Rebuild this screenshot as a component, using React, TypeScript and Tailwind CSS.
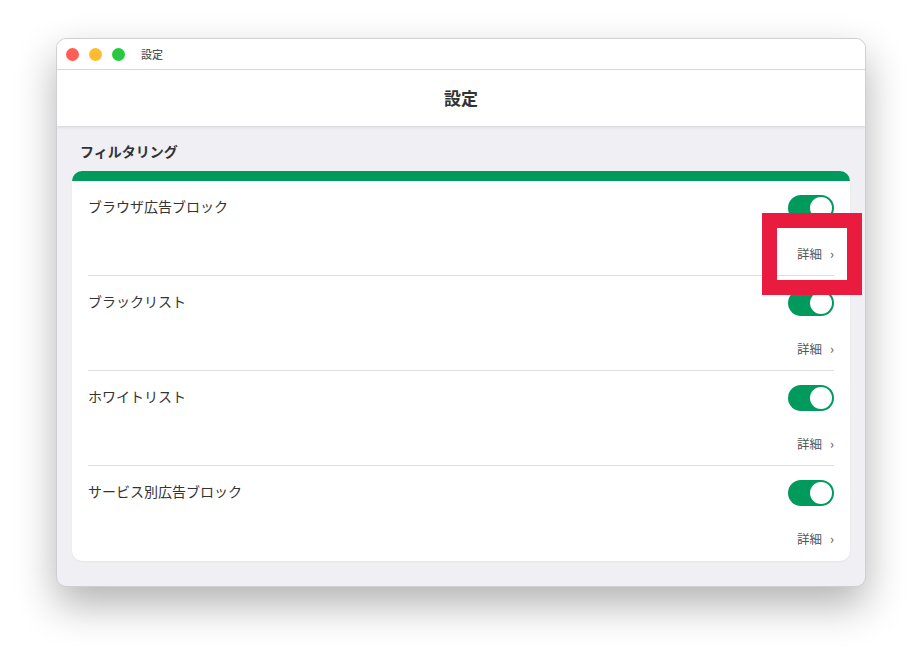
import React from 'react'

const rows = ['ブラウザ広告ブロック', 'ブラックリスト', 'ホワイトリスト', 'サービス別広告ブロック']

const Toggle = () => (
  <div className="w-[46px] h-[26px] rounded-full bg-[#009a5c] p-[2px] flex justify-end">
    <div className="w-[22px] h-[22px] rounded-full bg-white" />
  </div>
)

const App = () => {
  return (
    <div
      className="w-[922px] h-[661px] bg-white flex justify-center pt-[38px]"
      style={{ fontFamily: '"Noto Sans CJK JP", "Noto Sans", sans-serif' }}
    >
      <div className="relative w-[810px] h-[549px] rounded-[10px] bg-[#efeff4] border border-[#cfcfd3] shadow-[0_18px_40px_rgba(0,0,0,0.3)] overflow-hidden flex flex-col">
        {/* title bar */}
        <div className="h-[31px] bg-white border-b border-[#dcdcdc] flex items-center px-[9px] gap-[10px] shrink-0">
          <div className="flex gap-[10px]">
            <span className="w-[13px] h-[13px] rounded-full bg-[#fe5f57]" />
            <span className="w-[13px] h-[13px] rounded-full bg-[#febc2e]" />
            <span className="w-[13px] h-[13px] rounded-full bg-[#28c840]" />
          </div>
          <span className="ml-[6px] text-[11px] font-medium text-[#555]">設定</span>
        </div>
        {/* header */}
        <div className="h-[56px] bg-white flex items-center justify-center shadow-[0_1px_3px_rgba(0,0,0,0.12)] shrink-0 z-10">
          <span className="text-[17px] font-bold text-[#333]">設定</span>
        </div>
        {/* body */}
        <div className="px-[15px] pt-[15px]">
          <div className="px-[8px] h-[20px] flex items-center text-[14px] font-bold text-[#333]">フィルタリング</div>
          <div className="mt-[10px] bg-white rounded-[10px] overflow-hidden shadow-[0_1px_2px_rgba(0,0,0,0.05)]">
            <div className="h-[10px] bg-[#009a5c]" />
            {rows.map((label, i) => (
              <div
                key={label}
                className={`mx-4 h-[95px] pt-[14px] ${i < rows.length - 1 ? 'border-b border-[#dedede]' : ''}`}
              >
                <div className="h-[26px] flex items-center justify-between">
                  <span className="text-[14px] text-[#333] pb-[4px]">{label}</span>
                  <Toggle />
                </div>
                <div className="mt-[24px] h-[18px] flex items-center justify-end gap-[8px] text-[12.5px] text-[#555]">
                  <span>詳細</span>
                  <span className="text-[13px] leading-none pb-[1px]">›</span>
                </div>
              </div>
            ))}
          </div>
        </div>
      </div>
      {/* annotation */}
      <div className="absolute left-[762px] top-[213px] w-[100px] h-[82px] border-[15px] border-[#e91b3f]" />
    </div>
  )
}

export default App
